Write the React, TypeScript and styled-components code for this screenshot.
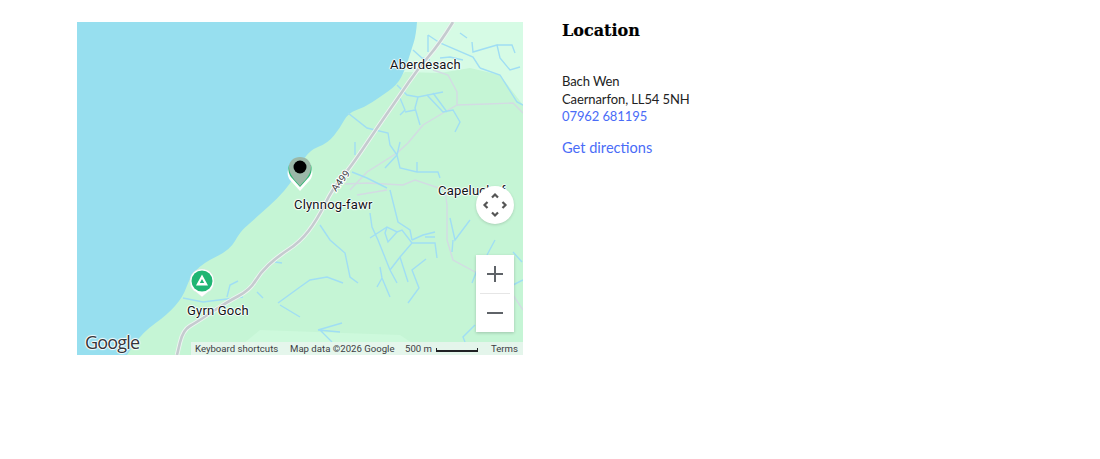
import { createGlobalStyle, styled } from "styled-components";

const GlobalStyle = createGlobalStyle`
    html, body {
        margin: 0;
        background: #ffffff;
    }
`;

const Section = styled.section`
    display: flex;
    align-items: flex-start;
    gap: 39px;
    height: 459px;
    box-sizing: border-box;
    padding: 22px 0 0 77px;
`;

const MapFrame = styled.div`
    position: relative;
    flex: none;
    width: 446px;
    height: 333px;
    overflow: hidden;
    background: #c5f5d5;
    font-family: Roboto, sans-serif;
`;

const MapArt = styled.svg`
    display: block;
    width: 100%;
    height: 100%;
`;

const PlaceLabel = styled.span<{ $x: number; $y: number }>`
    position: absolute;
    left: ${(p) => p.$x}px;
    top: ${(p) => p.$y}px;
    font-size: 13px;
    line-height: 16px;
    letter-spacing: 0.2px;
    white-space: nowrap;
    color: #111417;
    text-shadow: -1px 0 1px #fff, 1px 0 1px #fff, 0 -1px 1px #fff, 0 1px 1px #fff;
`;

const Pin = styled.svg<{ $x: number; $y: number }>`
    position: absolute;
    left: ${(p) => p.$x}px;
    top: ${(p) => p.$y}px;
`;

const GoogleMark = styled.span`
    position: absolute;
    left: 8px;
    bottom: 2px;
    font-family: "Open Sans", sans-serif;
    font-size: 18px;
    font-weight: 500;
    line-height: 22px;
    letter-spacing: -0.8px;
    color: #33363a;
    text-shadow: -1px 0 1px #fff, 1px 0 1px #fff, 0 -1px 1px #fff, 0 1px 1px #fff;
`;

const PanControl = styled.div`
    position: absolute;
    left: 399px;
    top: 164px;
    display: flex;
    align-items: center;
    justify-content: center;
    width: 38px;
    height: 38px;
    border-radius: 50%;
    background: #ffffff;
    box-shadow: 0 1px 3px rgba(0, 0, 0, 0.15);
`;

const ZoomControl = styled.div`
    position: absolute;
    left: 399px;
    top: 233px;
    display: flex;
    flex-direction: column;
    width: 38px;
    height: 77px;
    background: #ffffff;
    box-shadow: 0 1px 3px rgba(0, 0, 0, 0.2);
`;

const ZoomButton = styled.div`
    display: flex;
    flex: 1;
    align-items: center;
    justify-content: center;
`;

const ZoomDivider = styled.div`
    height: 1px;
    margin: 0 4px;
    background: #e6e6e6;
`;

const AttributionBar = styled.div`
    position: absolute;
    right: 0;
    bottom: 0;
    display: flex;
    align-items: center;
    width: 332px;
    height: 13px;
    box-sizing: border-box;
    background: rgba(235, 245, 240, 0.8);
    font-size: 9.6px;
    line-height: 13px;
    color: #3c4043;
    white-space: nowrap;
`;

const AttributionItem = styled.span<{ $width: number }>`
    flex: none;
    box-sizing: border-box;
    width: ${(p) => p.$width}px;
    padding-left: 4px;
`;

const ScaleItem = styled.span`
    display: flex;
    flex: none;
    align-items: center;
    gap: 4px;
    width: 87px;
    box-sizing: border-box;
    padding-left: 5px;
`;

const ScaleBar = styled.i`
    display: block;
    width: 42px;
    height: 4px;
    box-sizing: border-box;
    margin-top: 3px;
    border: 1px solid #202124;
    border-top: 0;
    border-bottom-width: 2px;
`;

const Details = styled.div`
    font-family: Lato, sans-serif;
    color: #222222;
`;

const Heading = styled.h2`
    margin: 0 0 33px;
    font-family: "DejaVu Serif", serif;
    font-size: 16px;
    line-height: 18px;
    font-weight: 700;
    color: #000000;
    -webkit-text-stroke: 0.2px #000000;
`;

const Address = styled.address`
    font-style: normal;
    font-size: 13px;
    letter-spacing: -0.1px;
    line-height: 17.5px;
`;

const TextLink = styled.a`
    display: block;
    color: #4a6cf7;
    text-decoration: none;
`;

const DirectionsLink = styled(TextLink)`
    margin-top: 12px;
    font-size: 14.6px;
    line-height: 19px;
`;

// rounds off the corners of a traced line, so coast and road don't look polygonal
const smooth = (pts: number[][]) => {
    let d = `M${pts[0][0]} ${pts[0][1]}`;
    for (let i = 1; i < pts.length - 1; i++) {
        const mx = (pts[i][0] + pts[i + 1][0]) / 2;
        const my = (pts[i][1] + pts[i + 1][1]) / 2;
        d += `Q${pts[i][0]} ${pts[i][1]} ${mx} ${my}`;
    }
    const last = pts[pts.length - 1];
    return `${d}L${last[0]} ${last[1]}`;
};

const coast = [
    [417, 22], [416, 35], [412, 48], [405, 70], [397, 85], [380, 97], [365, 107], [348, 113],
    [340, 128], [328, 143], [310, 150], [300, 165], [287, 190], [250, 223], [240, 232],
    [230, 250], [203, 263], [190, 277], [183, 297], [167, 315], [143, 332], [127, 355],
];

const roadPoints = [
    [453, 22], [440, 43], [417, 70], [400, 95], [377, 128], [350, 168], [333, 188], [317, 220],
    [300, 242], [277, 257], [260, 273], [250, 290], [227, 302], [197, 322], [183, 330], [177, 355],
];

const rivers = [
    "M428 35V52M428 35L440 43L473 57L480 68",
    "M472 42L473 52L497 45L500 58L510 70L520 67M497 45L512 45L515 53",
    "M460 33L467 38M480 68L500 75L517 102L523 105",
    "M413 50L422 58L430 60M440 58L450 57L463 60",
    "M397 85L407 95L418 97L443 92M418 97L415 108L420 125M400 98L405 110L400 115M405 112L415 110",
    "M427 95L443 112L453 110L460 122L455 132M433 93L447 112",
    "M348 113L367 128L388 133L390 145L397 155L400 142M397 155L385 168M355 142V155M397 155L400 168L417 172L438 172L440 178M417 162V172M352 172L367 178L387 188",
    "M320 225L330 240L345 253L350 277L358 283",
    "M300 287L310 280L327 277L343 283",
    "M370 213L372 227L378 240L390 270L397 283M370 238L387 227L397 232L402 230L412 243L400 257L390 270M412 243L435 243L437 258",
    "M412 240L423 235L435 232M425 237L435 237M387 227L385 233L388 242L397 232M400 257L408 282",
    "M380 267L382 278L390 297M382 278L377 287M426 259L412 270L419 288L408 303",
    "M390 190L398 222L410 230L412 240M450 218L455 240L470 220M453 240L452 252M495 240L487 255M513 252L522 262",
    "M475 325L463 337L465 342M472 283L477 270M513 285L523 280",
    "M318 330L342 323M318 330L340 332M320 330L332 342",
    "M183 298L203 302L243 297M227 297L230 285L238 281M257 292L263 298",
    "M278 303L300 287M280 305L300 317M275 262L282 263",
];

const tracks = [
    "M433 70L448 75L457 92V105L487 104L513 103L523 113",
    "M457 105L443 113L423 125L408 143L397 153L367 172L350 190",
    "M345 184L367 183L403 185L415 180L445 190L447 205V240L453 260L477 273",
    "M513 295L523 310M357 195L387 190",
];

export default function App() {
    const road = smooth(roadPoints);
    return (
        <>
            <GlobalStyle />
            <Section>
                <MapFrame>
                    <MapArt viewBox="77 22 446 333">
                        <path d="M417 22L523 22V105L500 75L470 68L440 73L405 72L380 95L417 22Z" fill="#d6fbe5" />
                        <path d="M230 355L260 330L400 335L430 355Z" fill="#cdf9dc" />
                        <path d={`${smooth(coast)}H77V22Z`} fill="#97dfef" />
                        {tracks.map((d) => (
                            <path key={d} d={d} fill="none" stroke="#d3dbe3" strokeWidth="1.4" />
                        ))}
                        {rivers.map((d) => (
                            <path key={d} d={d} fill="none" stroke="#a0def4" strokeWidth="1.4" />
                        ))}
                        <path d={road} fill="none" stroke="#eef5f2" strokeWidth="4.4" />
                        <path d={road} fill="none" stroke="#c5cbcf" strokeWidth="2.6" />
                        <text
                            x="0"
                            y="0"
                            transform="translate(336 192) rotate(-52)"
                            fontFamily="Roboto, sans-serif"
                            fontSize="10"
                            fill="#3c4043"
                            stroke="#ffffff"
                            strokeWidth="2"
                            paintOrder="stroke"
                        >
                            A499
                        </text>
                    </MapArt>

                    <PlaceLabel $x={313} $y={35}>Aberdesach</PlaceLabel>
                    <PlaceLabel $x={361} $y={161}>Capeluchaf</PlaceLabel>
                    <PlaceLabel $x={217} $y={175}>Clynnog-fawr</PlaceLabel>
                    <PlaceLabel $x={110} $y={281}>Gyrn Goch</PlaceLabel>

                    <Pin $x={209} $y={133} width="28" height="37" viewBox="0 0 28 37">
                        <path d="M14 36L4 25C1 21 1 16 3 13H25C27 16 27 21 24 25Z" fill="#ffffff" />
                        <path d="M14 32L5 22C2 18 2 13 3 10H25C26 13 26 18 23 22Z" fill="#2fb673" />
                        <path
                            d="M14 31C10 26 3 20 3 12C3 6 8 2 14 2C20 2 25 6 25 12C25 20 18 26 14 31Z"
                            fill="#9bb8a8"
                        />
                        <circle cx="14" cy="12" r="6.5" fill="#000000" />
                    </Pin>
                    <Pin $x={112} $y={246} width="26" height="31" viewBox="0 0 26 31">
                        <path
                            d="M13 29L7 24C3 22 1 18 1 13C1 6 6 1 13 1C20 1 25 6 25 13C25 18 23 22 19 24Z"
                            fill="#ffffff"
                            stroke="#d8e0dc"
                            strokeWidth="0.5"
                        />
                        <circle cx="13" cy="13" r="10.5" fill="#1fb573" />
                        <path d="M13 6.5L19 17.5H7ZM13 11L10.8 15H15.2Z" fill="#ffffff" fillRule="evenodd" />
                    </Pin>

                    <GoogleMark>Google</GoogleMark>

                    <PanControl>
                        <svg width="26" height="26" viewBox="0 0 26 26" fill="none" stroke="#555555" strokeWidth="2.2">
                            <path d="M10 5.5L13 2.5L16 5.5" />
                            <path d="M10 20.5L13 23.5L16 20.5" />
                            <path d="M5.5 10L2.5 13L5.5 16" />
                            <path d="M20.5 10L23.5 13L20.5 16" />
                        </svg>
                    </PanControl>

                    <ZoomControl>
                        <ZoomButton>
                            <svg width="18" height="18" viewBox="0 0 18 18" fill="#5f6368">
                                <path d="M8 1H10V8H17V10H10V17H8V10H1V8H8Z" />
                            </svg>
                        </ZoomButton>
                        <ZoomDivider />
                        <ZoomButton>
                            <svg width="18" height="18" viewBox="0 0 18 18" fill="#5f6368">
                                <path d="M1 8H17V10H1Z" />
                            </svg>
                        </ZoomButton>
                    </ZoomControl>

                    <AttributionBar>
                        <AttributionItem $width={95}>Keyboard shortcuts</AttributionItem>
                        <AttributionItem $width={114}>Map data ©2026 Google</AttributionItem>
                        <ScaleItem>
                            500 m
                            <ScaleBar />
                        </ScaleItem>
                        <AttributionItem $width={36}>Terms</AttributionItem>
                    </AttributionBar>
                </MapFrame>

                <Details>
                    <Heading>Location</Heading>
                    <Address>
                        Bach Wen
                        <br />
                        Caernarfon, LL54 5NH
                        <TextLink href="#">07962 681195</TextLink>
                    </Address>
                    <DirectionsLink href="#">Get directions</DirectionsLink>
                </Details>
            </Section>
        </>
    );
}
